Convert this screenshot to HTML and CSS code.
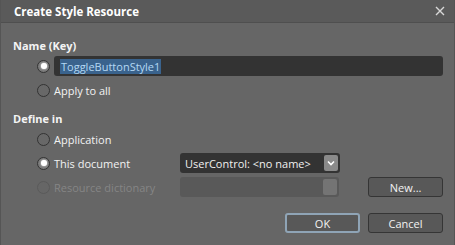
FILE: index.html
```html
<!DOCTYPE html>
<html lang="en">
<head>
  <meta charset="UTF-8" />
  <title>Create Style Resource</title>
  <link rel="stylesheet" href="styles.css">
</head>
<body>
  <div class="dialog">
    <!-- Title bar -->
    <div class="titlebar">
      <span class="title">Create Style Resource</span>
      <svg class="close" width="10" height="10" viewBox="0 0 10 10">
        <path d="M1 1 L9 9 M9 1 L1 9" stroke="#d8d8d8" stroke-width="1.4" />
      </svg>
    </div>

    <div class="content">
      <!-- Name -->
      <div class="group-label">Name (Key)</div>
      <div class="row first">
        <span class="radio checked"></span>
        <div class="textbox"><span class="selected">ToggleButtonStyle1</span></div>
      </div>
      <div class="row">
        <span class="radio"></span>
        <span class="label">Apply to all</span>
      </div>

      <!-- Define in -->
      <div class="group-label second">Define in</div>
      <div class="row first">
        <span class="radio"></span>
        <span class="label">Application</span>
      </div>
      <div class="row">
        <span class="radio checked"></span>
        <span class="label wide">This document</span>
        <div class="combo">
          <span class="combo-text">UserControl: &lt;no name&gt;</span>
          <span class="combo-btn">
            <svg width="8" height="6" viewBox="0 0 8 6"><path d="M1 1.5 L4 4.5 L7 1.5" fill="none" stroke="#fff" stroke-width="1.6"/></svg>
          </span>
        </div>
      </div>
      <div class="row disabled">
        <span class="radio"></span>
        <span class="label wide">Resource dictionary</span>
        <div class="combo">
          <span class="combo-text"></span>
          <span class="combo-btn"></span>
        </div>
        <button class="btn new-btn">New...</button>
      </div>

      <!-- Footer -->
      <div class="footer">
        <button class="btn default">OK</button>
        <button class="btn">Cancel</button>
      </div>
    </div>
  </div>
</body>
</html>
```

FILE: styles.css
```css
/* RESET */
* { box-sizing: border-box; margin: 0; padding: 0; }
body {
  background: #666;
  font-family: 'Open Sans', 'Noto Sans', sans-serif;
  font-size: 11px;
  color: #f0f0f0;
}

/* DIALOG */
.dialog {
  width: 455px;
  height: 245px;
  background: #666666;
  border-left: 1px solid #555;
  border-right: 1px solid #555;
  display: flex;
  flex-direction: column;
}
.titlebar {
  height: 23px;
  background: #5a5a5a;
  border-bottom: 1px solid #4f4f4f;
  display: flex;
  align-items: center;
  justify-content: space-between;
  padding: 0 9px 0 13px;
}
.title {
  font-weight: bold;
  font-size: 11.5px;
  color: #fff;
}
.close { display: block; }

.content {
  padding: 15px 11px 0 12px;
  display: flex;
  flex-direction: column;
}

/* GROUPS */
.group-label {
  font-weight: bold;
  height: 16px;
  line-height: 16px;
  color: #f4f4f4;
}
.group-label.second { margin-top: 11px; }

.row {
  display: flex;
  align-items: center;
  height: 20px;
  padding-left: 24px;
  margin-top: 4px;
}
.row.first { margin-top: 2px; }
.label { color: #f2f2f2; }
.label.wide { width: 126px; }

/* RADIOS */
.radio {
  width: 13px;
  height: 13px;
  border-radius: 50%;
  border: 1px solid #333;
  background: #686868;
  margin-right: 4px;
  flex: none;
  position: relative;
}
.radio.checked {
  background: #7a7a7a;
}
.radio.checked::after {
  content: '';
  position: absolute;
  left: 2.5px; top: 2.5px;
  width: 6px; height: 6px;
  border-radius: 50%;
  background: #fff;
  box-shadow: 0 0 2px #fff;
}

/* TEXT BOX */
.textbox {
  flex: 1;
  height: 20px;
  background: #333;
  border-radius: 3px;
  padding-left: 6px;
  display: flex;
  align-items: center;
}
.selected {
  background: #3a638d;
  color: #b4d8f4;
  padding: 0 1px;
  font-size: 11px;
  line-height: 15px;
}

/* COMBO */
.combo {
  width: 160px;
  height: 20px;
  background: #333;
  border-radius: 3px;
  display: flex;
  align-items: center;
  justify-content: space-between;
  padding: 0 2px 0 5px;
}
.combo-text { color: #f0f0f0; }
.combo-btn {
  width: 14px;
  height: 16px;
  background: #8a8a8a;
  border-radius: 2px;
  display: flex;
  align-items: center;
  justify-content: center;
}

/* DISABLED ROW */
.disabled .label { color: #858585; }
.disabled .radio { border-color: #5a5a5a; background: #666; }
.disabled .combo { background: #595959; }
.disabled .combo-btn { background: #747474; }

/* BUTTONS */
.btn {
  width: 75px;
  height: 20px;
  background: #585858;
  border: 1px solid #353535;
  border-radius: 3px;
  color: #f2f2f2;
  font-family: inherit;
  font-size: 11px;
}
.btn.default { border: 2px solid #8fa4b6; }
.new-btn { margin-left: 29px; }

.footer {
  display: flex;
  justify-content: flex-end;
  gap: 8px;
  margin-top: 16px;
}
```
